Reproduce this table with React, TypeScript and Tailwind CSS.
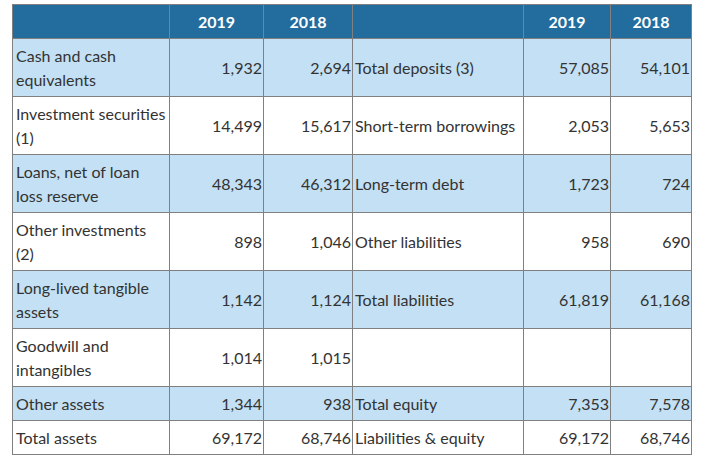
import React from "react";

type Row = [string, string, string, string, string, string, boolean];

const rows: Row[] = [
  ["Cash and cash equivalents", "1,932", "2,694", "Total deposits (3)", "57,085", "54,101", true],
  ["Investment securities (1)", "14,499", "15,617", "Short-term borrowings", "2,053", "5,653", true],
  ["Loans, net of loan loss reserve", "48,343", "46,312", "Long-term debt", "1,723", "724", true],
  ["Other investments (2)", "898", "1,046", "Other liabilities", "958", "690", true],
  ["Long-lived tangible assets", "1,142", "1,124", "Total liabilities", "61,819", "61,168", true],
  ["Goodwill and intangibles", "1,014", "1,015", "", "", "", true],
  ["Other assets", "1,344", "938", "Total equity", "7,353", "7,578", false],
  ["Total assets", "69,172", "68,746", "Liabilities & equity", "69,172", "68,746", false],
];

export default function App() {
  const cell = "border border-[#808080] align-middle";
  return (
    <div
      className="pl-[12px] pt-[4px] bg-white min-h-[471px] text-[#333333] text-[16px] leading-[24px]"
      style={{ fontFamily: "Lato, 'Open Sans', sans-serif" }}
    >
      <table className="border-collapse table-fixed w-[679px]">
        <colgroup>
          <col className="w-[157px]" />
          <col className="w-[94px]" />
          <col className="w-[89px]" />
          <col className="w-[171px]" />
          <col className="w-[87px]" />
          <col className="w-[81px]" />
        </colgroup>
        <thead>
          <tr className="bg-[#236d9e] text-white font-bold h-[34px]">
            <th className={cell}></th>
            <th className={`${cell} text-center`}>2019</th>
            <th className={`${cell} text-center`}>2018</th>
            <th className={cell}></th>
            <th className={`${cell} text-center`}>2019</th>
            <th className={`${cell} text-center`}>2018</th>
          </tr>
        </thead>
        <tbody>
          {rows.map((r, i) => (
            <tr
              key={i}
              className={`${i % 2 === 0 ? "bg-[#c3e0f4]" : "bg-white"} ${r[6] ? "h-[58px]" : "h-[34px]"}`}
            >
              <td className={`${cell} pl-[3px] pr-[1px] text-left`}>{r[0]}</td>
              <td className={`${cell} pr-[1px] text-right`}>{r[1]}</td>
              <td className={`${cell} pr-[1px] text-right`}>{r[2]}</td>
              <td className={`${cell} pl-[2px] text-left`}>{r[3]}</td>
              <td className={`${cell} pr-[1px] text-right`}>{r[4]}</td>
              <td className={`${cell} pr-[1px] text-right`}>{r[5]}</td>
            </tr>
          ))}
        </tbody>
      </table>
    </div>
  );
}
